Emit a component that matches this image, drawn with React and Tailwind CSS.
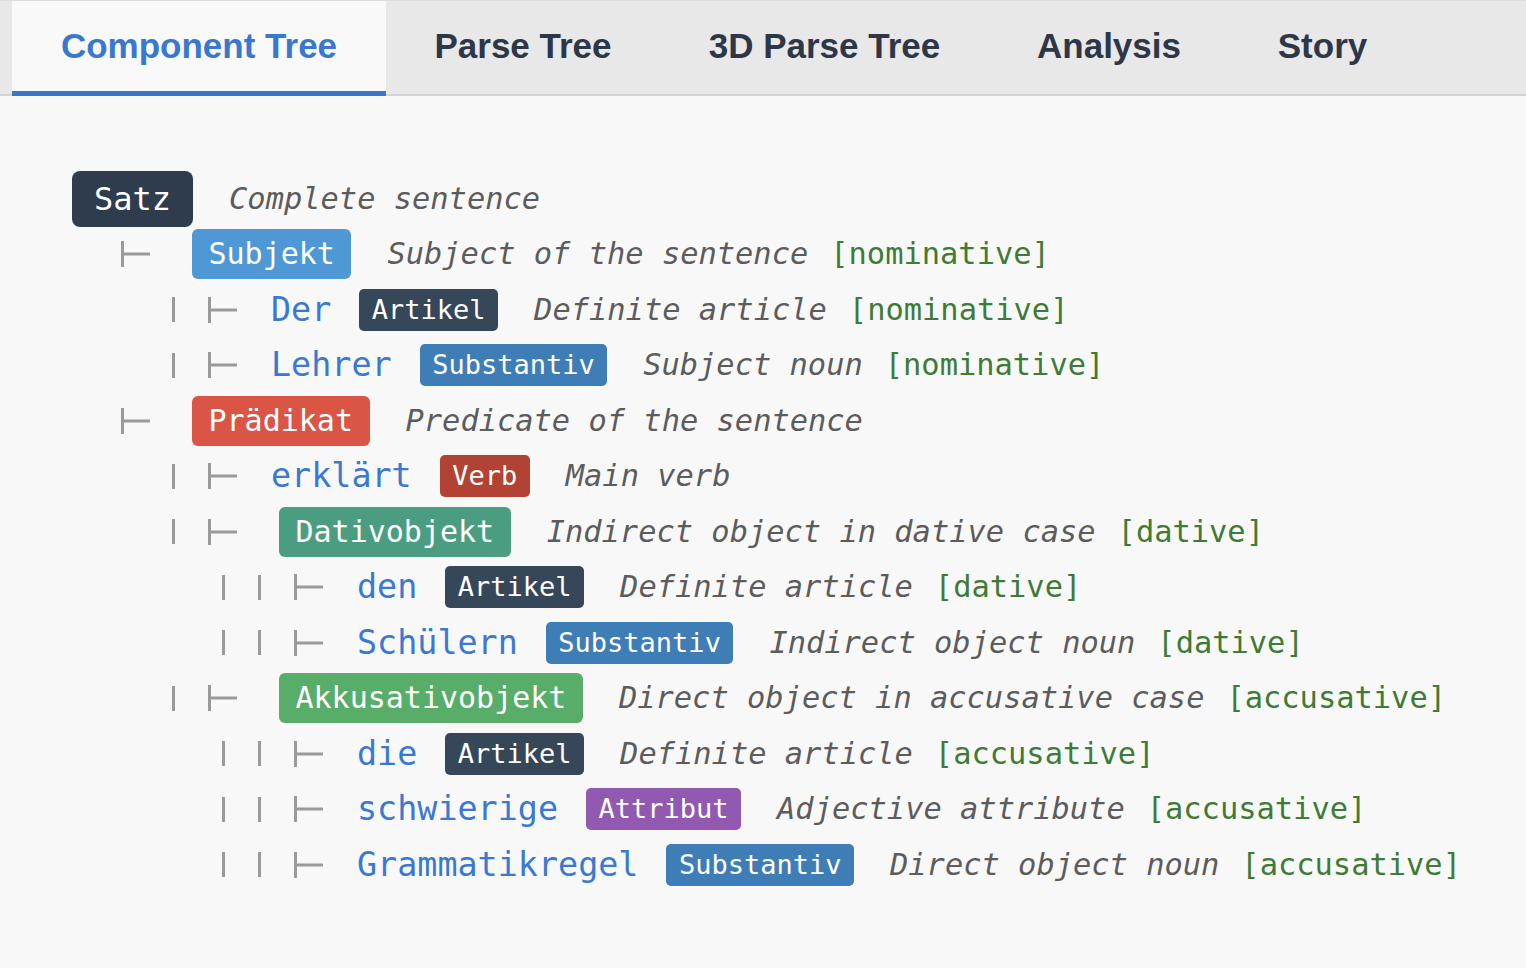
import React from 'react';

const tabs = [
  { label: 'Component Tree', width: 'w-[374px]', active: true },
  { label: 'Parse Tree', width: 'w-[274px]' },
  { label: '3D Parse Tree', width: 'w-[329px]' },
  { label: 'Analysis', width: 'w-[240px]' },
  { label: 'Story', width: 'w-[187px]' },
];

// tree rows, flattened in display order
const rows = [
  { level: 0, node: 'Satz', color: 'bg-[#2f3c4e]', desc: 'Complete sentence' },
  { level: 1, node: 'Subjekt', color: 'bg-[#4f98d6]', desc: 'Subject of the sentence', kase: 'nominative' },
  { level: 2, word: 'Der', tag: 'Artikel', color: 'bg-[#364759]', desc: 'Definite article', kase: 'nominative' },
  { level: 2, word: 'Lehrer', tag: 'Substantiv', color: 'bg-[#3f7db6]', desc: 'Subject noun', kase: 'nominative' },
  { level: 1, node: 'Prädikat', color: 'bg-[#da5546]', desc: 'Predicate of the sentence' },
  { level: 2, word: 'erklärt', tag: 'Verb', color: 'bg-[#b24234]', desc: 'Main verb' },
  { level: 2, node: 'Dativobjekt', color: 'bg-[#4a9d80]', desc: 'Indirect object in dative case', kase: 'dative' },
  { level: 3, word: 'den', tag: 'Artikel', color: 'bg-[#364759]', desc: 'Definite article', kase: 'dative' },
  { level: 3, word: 'Schülern', tag: 'Substantiv', color: 'bg-[#3f7db6]', desc: 'Indirect object noun', kase: 'dative' },
  { level: 2, node: 'Akkusativobjekt', color: 'bg-[#58ad69]', desc: 'Direct object in accusative case', kase: 'accusative' },
  { level: 3, word: 'die', tag: 'Artikel', color: 'bg-[#364759]', desc: 'Definite article', kase: 'accusative' },
  { level: 3, word: 'schwierige', tag: 'Attribut', color: 'bg-[#9259b0]', desc: 'Adjective attribute', kase: 'accusative' },
  { level: 3, word: 'Grammatikregel', tag: 'Substantiv', color: 'bg-[#3f7db6]', desc: 'Direct object noun', kase: 'accusative' },
];

const indent = ['pl-[72px]', 'pl-[121px]', 'pl-[172px]', 'pl-[222px]'];

const Pipe = () => (
  <svg width="3" height="25" className="mr-[33px] shrink-0">
    <path d="M1.5 0V25" stroke="#9a9a9a" strokeWidth="3" />
  </svg>
);

const Branch = () => (
  <svg width="29" height="26" className="shrink-0">
    <path d="M1.5 0V26M1.5 13H29" stroke="#9a9a9a" strokeWidth="3" fill="none" />
  </svg>
);

const TreeRow = ({ row }) => {
  const { level, node, word, tag, color, desc, kase } = row;
  return (
    <div className={`flex items-center h-[55.5px] whitespace-nowrap ${indent[level]}`}>
      {level > 0 && (
        <>
          {Array.from({ length: level - 1 }).map((_, i) => <Pipe key={i} />)}
          <Branch />
        </>
      )}

      {node && level === 0 && (
        <span className={`${color} text-white text-[32px] leading-[40px] px-[22px] py-2 rounded-lg`}>{node}</span>
      )}
      {node && level > 0 && (
        <span className={`${color} text-white text-[30px] leading-[36px] px-[16.5px] py-[7px] rounded-md ml-[42px]`}>{node}</span>
      )}

      {word && (
        <>
          <span className="ml-[34px] text-[33.4px] leading-[40px] text-[#3a79d3]">{word}</span>
          <span className={`${color} ml-[28px] text-white text-[27px] leading-[34px] px-[12.5px] py-1 rounded-[5px]`}>{tag}</span>
        </>
      )}

      <span className="ml-[36px] text-[30.4px] italic text-[#5c5c5c]">{desc}</span>
      {kase && <span className="ml-[22px] text-[30.4px] text-[#3e7b35]">[{kase}]</span>}
    </div>
  );
};

const App = () => {
  return (
    <div className="min-h-[968px] bg-[#f8f8f8]">
      {/* Tabs */}
      <div className="flex h-[96px] pl-[12px] bg-[#e8e8e8] border-t border-[#dcdcdc] border-b-2 border-b-[#d4d4d4] font-['Liberation_Sans',Arial,sans-serif]">
        {tabs.map(tab => (
          <button
            key={tab.label}
            className={`${tab.width} h-[94px] pb-[4px] text-[35px] font-bold flex items-center justify-center
              ${tab.active ? 'bg-[#f9f9f9] text-[#3a78d0] border-b-[5px] border-[#3a77c9] h-[95px] pt-[5px]' : 'text-[#2d3748]'}`}
          >
            {tab.label}
          </button>
        ))}
      </div>

      {/* Component tree */}
      <div className="pt-[75px] font-['DejaVu_Sans_Mono',monospace]">
        {rows.map((row, i) => (
          <TreeRow key={i} row={row} />
        ))}
      </div>
    </div>
  );
};

export default App;
